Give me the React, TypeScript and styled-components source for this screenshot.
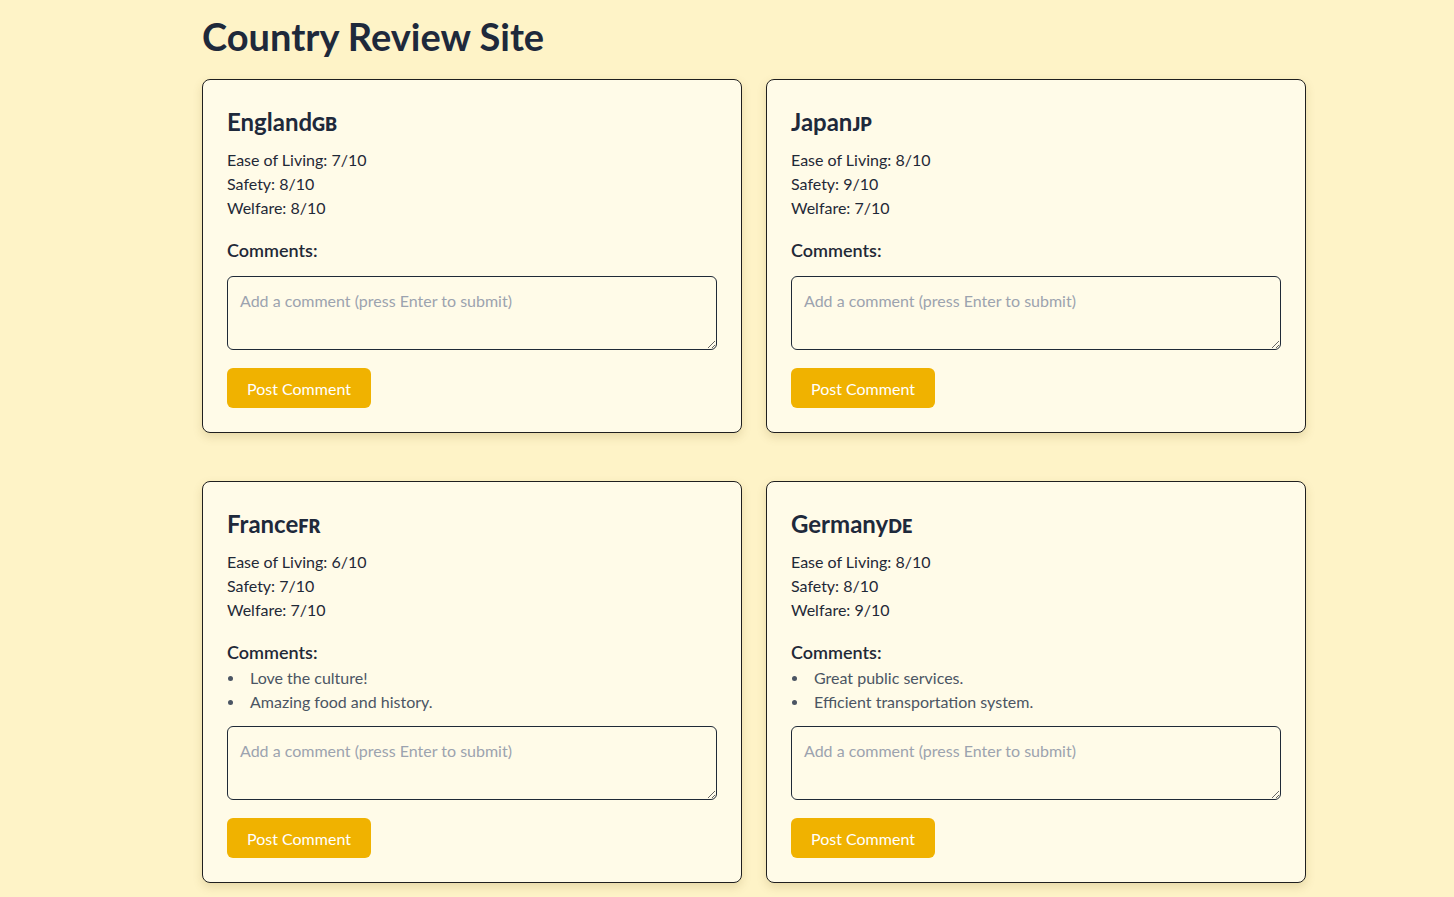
import React, { useState } from "react";
import styled, { createGlobalStyle } from "styled-components";

const GlobalStyle = createGlobalStyle`
  html, body { margin: 0; padding: 0; }
  body {
    background: #fef3c7;
    font-family: "Segoe UI", Lato, "Noto Sans", sans-serif;
    color: #1f2937;
  }
  * { box-sizing: border-box; }
`;

const Page = styled.div`
  padding: 13px 0 40px 202px;
  width: 1306px;
`;

const Title = styled.h1`
  margin: 0 0 20px;
  font-size: 38px;
  line-height: 46px;
  font-weight: 700;
  color: #1e293b;
`;

const Grid = styled.div`
  display: grid;
  grid-template-columns: 540px 540px;
  column-gap: 24px;
  row-gap: 48px;
`;

const Card = styled.div`
  background: #fffbe8;
  border: 1px solid #1f1f1f;
  border-radius: 8px;
  padding: 24px;
  box-shadow: 0 4px 10px rgba(120, 100, 30, 0.18);
`;

const Name = styled.h2`
  margin: 0 0 6px;
  font-size: 24px;
  line-height: 36px;
  font-weight: 700;
  color: #1e293b;
`;

const Code = styled.span`
  font-size: 18px;
  font-weight: 800;
`;

const Stat = styled.p`
  margin: 0;
  font-size: 16px;
  line-height: 24px;
  color: #1f2937;
`;

const CommentsTitle = styled.h3`
  margin: 17px 0 0;
  font-size: 18px;
  line-height: 26px;
  font-weight: 600;
  color: #1f2937;
`;

const List = styled.ul`
  margin: 0 0 12px;
  padding: 1px 0 0;
  list-style: none;
`;

const Item = styled.li`
  position: relative;
  padding-left: 23px;
  font-size: 16px;
  line-height: 24px;
  color: #4b5563;
  &::before {
    content: "";
    position: absolute;
    left: 1px;
    top: 10px;
    width: 5px;
    height: 5px;
    border-radius: 50%;
    background: #4b5563;
  }
`;

const Area = styled.textarea`
  display: block;
  width: 100%;
  height: 74px;
  padding: 12px;
  border: 1px solid #1f2937;
  border-radius: 6px;
  background: transparent;
  font-family: inherit;
  font-size: 16px;
  line-height: 24px;
  color: #1f2937;
  resize: vertical;
  &::placeholder { color: #9ca3af; }
  &:focus { outline: none; }
`;

const Button = styled.button`
  margin-top: 18px;
  height: 40px;
  padding: 0 20px;
  border: none;
  border-radius: 6px;
  background: #f0b200;
  color: #fff;
  font-family: inherit;
  font-size: 16px;
  cursor: pointer;
`;

type Country = {
  name: string;
  code: string;
  ease: number;
  safety: number;
  welfare: number;
  comments: string[];
};

const data: Country[] = [
  { name: "England", code: "GB", ease: 7, safety: 8, welfare: 8, comments: [] },
  { name: "Japan", code: "JP", ease: 8, safety: 9, welfare: 7, comments: [] },
  {
    name: "France",
    code: "FR",
    ease: 6,
    safety: 7,
    welfare: 7,
    comments: ["Love the culture!", "Amazing food and history."],
  },
  {
    name: "Germany",
    code: "DE",
    ease: 8,
    safety: 8,
    welfare: 9,
    comments: ["Great public services.", "Efficient transportation system."],
  },
];

function CountryCard({ c }: { c: Country }) {
  const [comments, setComments] = useState<string[]>(c.comments);
  const [text, setText] = useState("");
  const submit = () => {
    if (!text.trim()) return;
    setComments([...comments, text.trim()]);
    setText("");
  };
  return (
    <Card>
      <Name>
        {c.name}
        <Code>{c.code}</Code>
      </Name>
      <Stat>Ease of Living: {c.ease}/10</Stat>
      <Stat>Safety: {c.safety}/10</Stat>
      <Stat>Welfare: {c.welfare}/10</Stat>
      <CommentsTitle>Comments:</CommentsTitle>
      <List>
        {comments.map((m, i) => (
          <Item key={i}>{m}</Item>
        ))}
      </List>
      <Area
        placeholder="Add a comment (press Enter to submit)"
        value={text}
        onChange={(e) => setText(e.target.value)}
        onKeyDown={(e) => {
          if (e.key === "Enter" && !e.shiftKey) {
            e.preventDefault();
            submit();
          }
        }}
      />
      <Button onClick={submit}>Post Comment</Button>
    </Card>
  );
}

export default function App() {
  return (
    <>
      <GlobalStyle />
      <Page>
        <Title>Country Review Site</Title>
        <Grid>
          {data.map((c) => (
            <CountryCard key={c.code} c={c} />
          ))}
        </Grid>
      </Page>
    </>
  );
}
